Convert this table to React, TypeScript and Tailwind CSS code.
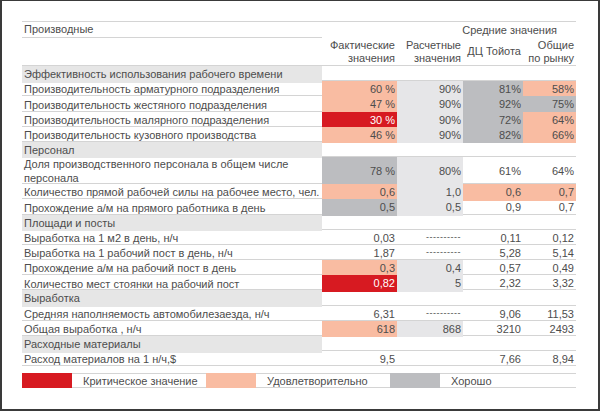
import React from "react";

type Cell = [string, string];

// cell colours
const red = "bg-[#d71a21] text-white";
const sal = "bg-[#f9bca2]";
const dk = "bg-[#bcbdc0]";
const lt = "bg-[#e6e6e8]";
const no = "";

type Row =
  | { section: string }
  | { label: React.ReactNode; cells: Cell[]; tall?: boolean };

const dash = "----------";

const rows: Row[] = [
  { section: "Эффективность использования рабочего времени" },
  {
    label: "Производительность арматурного подразделения",
    cells: [["60 %", sal], ["90%", lt], ["81%", dk], ["58%", sal]],
  },
  {
    label: "Производительность жестяного подразделения",
    cells: [["47 %", sal], ["90%", lt], ["92%", dk], ["75%", dk]],
  },
  {
    label: "Производительность малярного подразделения",
    cells: [["30 %", red], ["90%", lt], ["72%", dk], ["64%", sal]],
  },
  {
    label: "Производительность кузовного производства",
    cells: [["46 %", sal], ["90%", lt], ["82%", dk], ["66%", sal]],
  },
  { section: "Персонал" },
  {
    label: (
      <>
        Доля производственного персонала в общем числе
        <br />
        персонала
      </>
    ),
    tall: true,
    cells: [["78 %", dk], ["80%", lt], ["61%", no], ["64%", no]],
  },
  {
    label: "Количество прямой рабочей силы на рабочее место, чел.",
    cells: [["0,6", sal], ["1,0", lt], ["0,6", sal], ["0,7", sal]],
  },
  {
    label: "Прохождение а/м на прямого работника в день",
    cells: [["0,5", dk], ["0,5", lt], ["0,9", no], ["0,7", no]],
  },
  { section: "Площади и посты" },
  {
    label: "Выработка на 1 м2 в день, н/ч",
    cells: [["0,03", no], [dash, no], ["0,11", no], ["0,12", no]],
  },
  {
    label: "Выработка на 1 рабочий пост в день, н/ч",
    cells: [["1,87", no], [dash, no], ["5,28", no], ["5,14", no]],
  },
  {
    label: "Прохождение а/м на рабочий пост в день",
    cells: [["0,3", sal], ["0,4", lt], ["0,57", no], ["0,49", no]],
  },
  {
    label: "Количество мест стоянки на рабочий пост",
    cells: [["0,82", red], ["5", lt], ["2,32", no], ["3,32", no]],
  },
  { section: "Выработка" },
  {
    label: "Средняя наполняемость автомобилезаезда, н/ч",
    cells: [["6,31", no], [dash, no], ["9,06", no], ["11,53", no]],
  },
  {
    label: "Общая выработка , н/ч",
    cells: [["618", sal], ["868", lt], ["3210", no], ["2493", no]],
  },
  { section: "Расходные материалы" },
  {
    label: "Расход материалов на 1 н/ч,$",
    cells: [["9,5", no], ["", no], ["7,66", no], ["8,94", no]],
  },
];

const grid = "grid grid-cols-[300px_75px_66px_60px_53px]";

const TableRow = ({ row }: { row: Row }) => {
  if ("section" in row) {
    return (
      <div className={`${grid} h-[15.2px] border-b border-[#d4d4d4]`}>
        <div className="bg-[#e6e6e6] pl-[2px] flex items-center whitespace-nowrap">
          {row.section}
        </div>
      </div>
    );
  }
  return (
    <div
      className={`${grid} ${row.tall ? "h-[27px]" : "h-[15.2px]"} border-b border-[#d4d4d4]`}
    >
      <div className="pl-[2px] flex items-center leading-[14px] whitespace-nowrap">
        {row.label}
      </div>
      {row.cells.map(([v, c], i) => (
        <div
          key={i}
          className={`${c} flex items-center justify-end pr-[2px] ${v === dash ? "text-[9px] tracking-[0.5px]" : ""}`}
        >
          {v}
        </div>
      ))}
    </div>
  );
};

export default function App() {
  return (
    <div className="w-[600px] h-[411px] bg-white border-t border-x-2 border-b-2 border-[#3a3a3a] pl-[20px] pt-[20px] font-['Liberation_Sans',Arial,sans-serif] text-[11px] text-[#4d4d4d]">
      <div className="w-[554px]">
        {/* title */}
        <div className="flex h-[17px] border-t border-[#d4d4d4]">
          <div className="w-[300px] border-b border-[#d4d4d4] pl-[2px] flex items-center">
            Производные
          </div>
          <div className="flex-1 flex items-center justify-end pr-[19px]">
            Средние значения
          </div>
        </div>
        {/* column heads */}
        <div className={`${grid} h-[28px] border-b border-[#d4d4d4] leading-[13px] text-right`}>
          <div />
          <div className="flex items-center justify-end pr-[2px]">
            Фактические
            <br />
            значения
          </div>
          <div className="flex items-center justify-end pr-[2px]">
            Расчетные
            <br />
            значения
          </div>
          <div className="flex items-center justify-end pr-[2px]">ДЦ Тойота</div>
          <div className="flex items-center justify-end pr-[2px]">
            Общие
            <br />
            по рынку
          </div>
        </div>
        {rows.map((r, i) => (
          <TableRow key={i} row={r} />
        ))}
        {/* legend */}
        <div className="mt-[7px] flex h-[15px] border-y border-[#d4d4d4]">
          {[
            ["bg-[#d71a21]", "Критическое значение"],
            ["bg-[#f9bca2]", "Удовлетворительно"],
            ["bg-[#bcbdc0]", "Хорошо"],
          ].map(([c, t]) => (
            <div key={t} className="w-[184px] flex">
              <div className={`${c} w-[50px] -my-px`} />
              <div className="pl-[11px] flex items-center">{t}</div>
            </div>
          ))}
        </div>
      </div>
    </div>
  );
}
